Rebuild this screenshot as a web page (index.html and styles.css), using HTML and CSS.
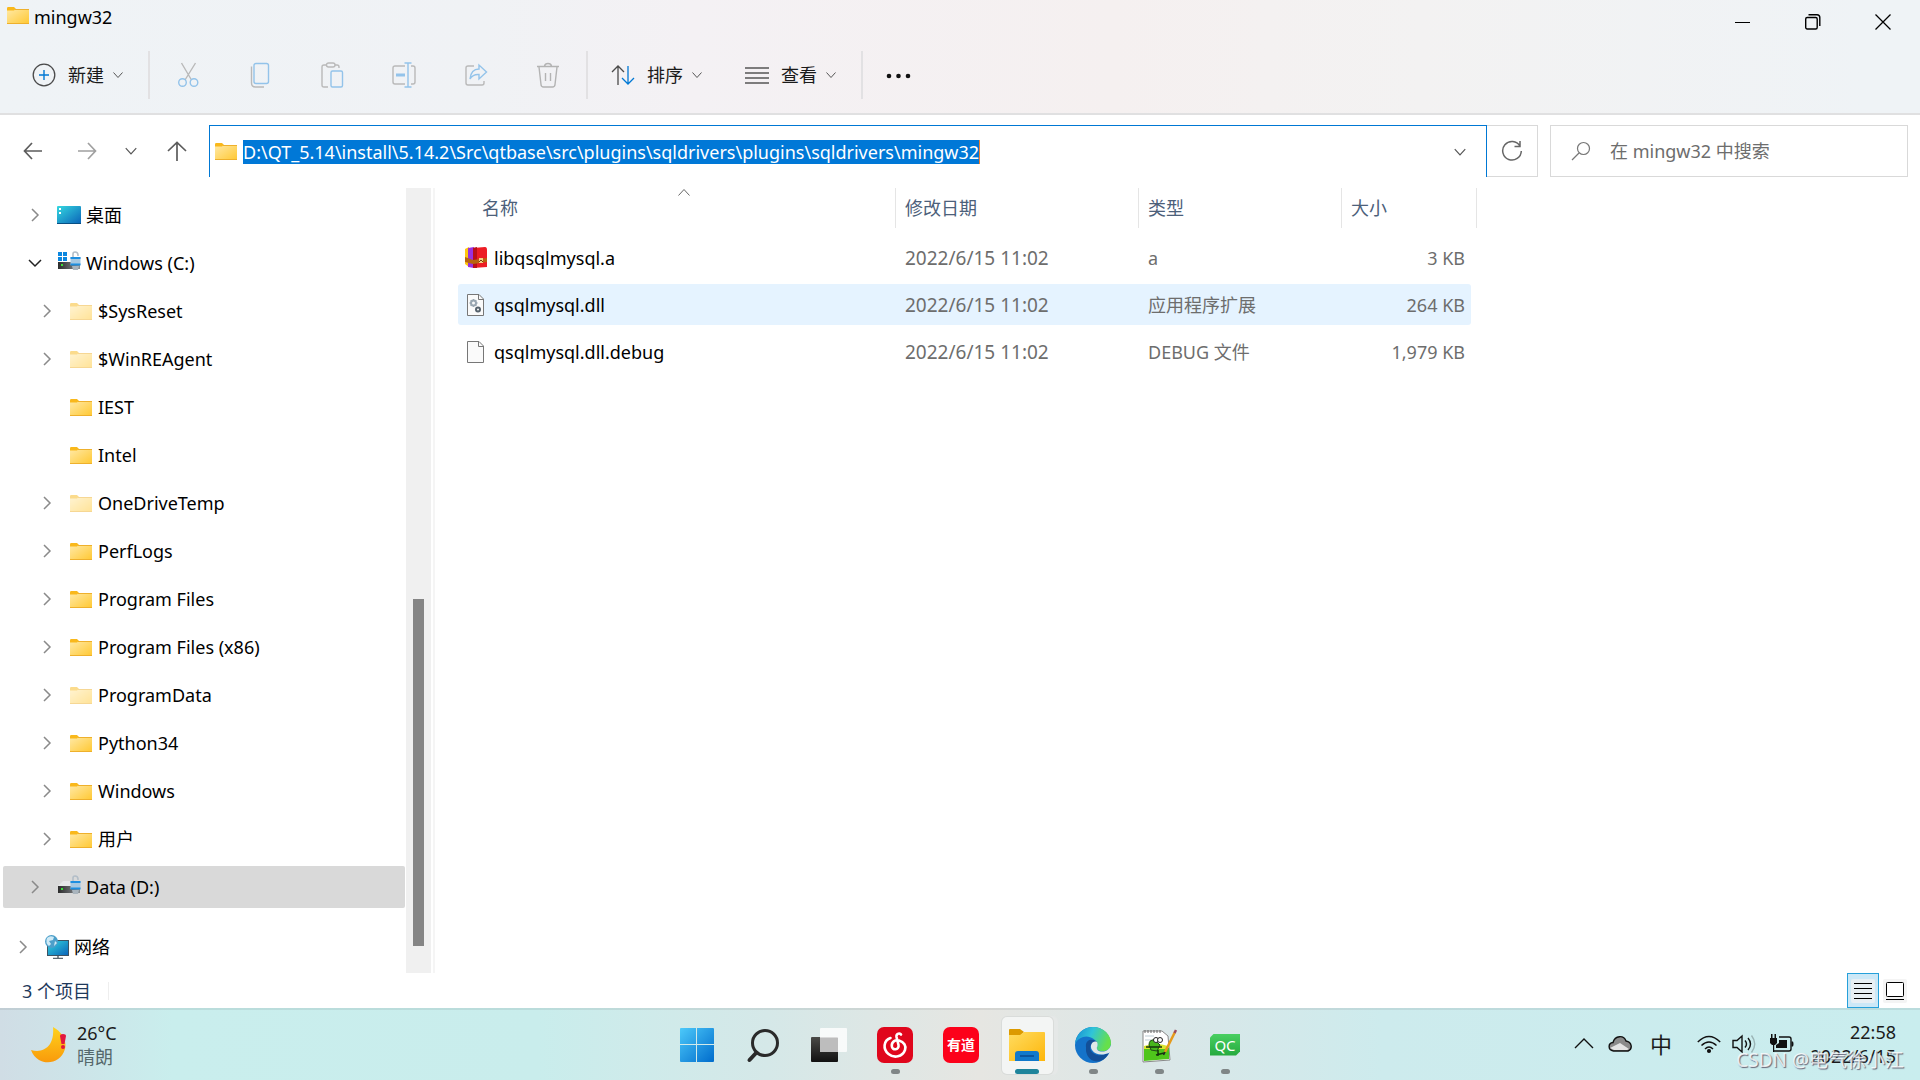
FILE: index.html
```html
<!DOCTYPE html>
<html lang="zh-CN">
<head>
    <meta charset="UTF-8">
    <meta name="viewport" content="width=device-width, initial-scale=1.0">
    <title>mingw32</title>
    <link rel="stylesheet" href="styles.css">
</head>
<body>
    <!-- Shared icons -->
    <svg class="sprite" aria-hidden="true">
        <defs>
            <linearGradient id="folderFill" x1="0" y1="0" x2="1" y2="1">
                <stop offset="0" stop-color="#ffe9a6"/>
                <stop offset="1" stop-color="#ffc832"/>
            </linearGradient>
            <linearGradient id="screenFill" x1="0" y1="0" x2="1" y2="1">
                <stop offset="0" stop-color="#35d8e0"/>
                <stop offset="1" stop-color="#0a62b8"/>
            </linearGradient>
            <linearGradient id="driveFill" x1="0" y1="0" x2="1" y2="0">
                <stop offset="0" stop-color="#2c2c2c"/>
                <stop offset="1" stop-color="#8a8f94"/>
            </linearGradient>
        </defs>
        <symbol id="folder" viewBox="0 0 22 17">
            <path d="M0 1.2Q0 0 1.2 0H7L8.5 1.5V5H0Z" fill="#f9b81b"/>
            <path d="M0 3.5H7L8.5 2H22V17H0Z" fill="url(#folderFill)"/>
            <path d="M8 2.5H22M0 16.5H22" stroke="#eeb02c" fill="none"/>
        </symbol>
        <symbol id="chev-down" viewBox="0 0 12 12">
            <path d="M1.500 3.500L6 8.500L10.500 3.500" fill="none" stroke="currentColor"/>
        </symbol>
        <symbol id="chev-right" viewBox="0 0 14 14">
            <path d="M4 1L10 7L4 13" fill="none" stroke="currentColor" stroke-width="1.500"/>
        </symbol>
        <symbol id="lock" viewBox="0 0 11 20">
            <path d="M3 7V3Q3 1 5 1Q8 1 8 4V5" fill="none" stroke="#b3bec8" stroke-width="1.600"/>
            <rect x="0.500" y="6" width="10" height="8" fill="#a5c8e2"/>
            <path d="M0.500 7H10.500M0.500 13.500H10.500" stroke="#1c8ee0" stroke-width="2"/>
            <path d="M2 15H9L8 19H3Z" fill="#a9b4bd"/>
        </symbol>
    </svg>

    <main class="window">
        <header class="chrome">
            <div class="titlebar">
                <svg class="folder"><use href="#folder"/></svg>
                <h1 class="title">mingw32</h1>
                <div class="window-buttons">
                    <button class="window-btn" aria-label="最小化"><svg width="16" height="16" viewBox="0 0 16 16"><path d="M0 8.500H15" stroke="#000"/></svg></button>
                    <button class="window-btn" aria-label="还原"><svg width="16" height="16" viewBox="0 0 16 16" fill="none" stroke="#000" stroke-width="1.400"><rect x="0.700" y="3.500" width="11.500" height="11.500" rx="1.500"/><path d="M3.500 0.700H12Q14.800 0.700 14.800 3.500V12"/></svg></button>
                    <button class="window-btn" aria-label="关闭"><svg width="16" height="16" viewBox="0 0 16 16"><path d="M0.500 0.500L15.500 15.500M15.500 0.500L0.500 15.500" stroke="#000" stroke-width="1.300"/></svg></button>
                </div>
            </div>

            <div class="command-bar">
                <button class="command">
                    <svg width="24" height="24" viewBox="0 0 24 24" fill="none"><circle cx="12" cy="12" r="10.800" stroke="#4a4a4a" stroke-width="1.300"/><path d="M12 7V17M7 12H17" stroke="#0078d4" stroke-width="1.400"/></svg>
                    <span>新建</span>
                    <svg class="chev"><use href="#chev-down"/></svg>
                </button>
                <div class="icon-commands">
                    <button class="icon-command" aria-label="剪切"><svg width="24" height="26" viewBox="0 0 24 26" fill="none" stroke-width="1.400"><path d="M5.500 1L15.500 18M19.500 1L9 18" stroke="#b9b9b9"/><circle cx="6.500" cy="20.500" r="3.800" stroke="#93c3ea"/><circle cx="18" cy="20.500" r="3.800" stroke="#93c3ea"/></svg></button>
                    <button class="icon-command" aria-label="复制"><svg width="24" height="26" viewBox="0 0 24 26" fill="none" stroke-width="1.400"><path d="M3.500 4.500V21Q3.500 25 7.500 25H16" stroke="#b9b9b9"/><rect x="6" y="1.500" width="14.500" height="20" rx="2" stroke="#93c3ea"/></svg></button>
                    <button class="icon-command" aria-label="粘贴"><svg width="24" height="26" viewBox="0 0 24 26" fill="none" stroke-width="1.400"><path d="M8 25H4Q2 25 2 23V5Q2 3 4 3H7M15 3H17Q19 3 19 5V6" stroke="#b9b9b9"/><rect x="6.500" y="1" width="8.500" height="4" rx="2" stroke="#b9b9b9"/><rect x="11" y="9" width="11.500" height="16" rx="1.500" stroke="#93c3ea"/></svg></button>
                    <button class="icon-command" aria-label="重命名"><svg width="24" height="26" viewBox="0 0 24 26" fill="none" stroke-width="1.400"><path d="M13 4H3Q1 4 1 6V20Q1 22 3 22H13M19 4H21Q23 4 23 6V20Q23 22 21 22H19" stroke="#b9b9b9"/><path d="M16 1V25M12.500 1H19.500M12.500 25H19.500" stroke="#93c3ea"/><path d="M4 13H13" stroke="#93c3ea" stroke-width="3"/></svg></button>
                    <button class="icon-command" aria-label="共享"><svg width="24" height="26" viewBox="0 0 24 26" fill="none" stroke-width="1.400"><path d="M10 4H4Q2 4 2 6V21Q2 23 4 23H18Q20 23 20 21V19" stroke="#b9b9b9"/><path d="M6 17Q7 7 15 7V3L22.500 10L15 17V12.500Q9 12 6 17Z" stroke="#93c3ea"/></svg></button>
                    <button class="icon-command" aria-label="删除"><svg width="24" height="26" viewBox="0 0 24 26" fill="none" stroke="#b3b3b3" stroke-width="1.400"><path d="M1 4.500H23M8.500 4Q9 1.500 12 1.500T15.500 4M3 5L5 22.500Q5.200 25 7.500 25H16.500Q18.800 25 19 22.500L21 5M9.500 11V19M14.500 11V19"/></svg></button>
                </div>
                <button class="command divided">
                    <svg width="24" height="24" viewBox="0 0 24 24" fill="none" stroke-width="1.300"><path d="M7 22V3M1 9L7 3L13 9" stroke="#4a4a4a"/><path d="M17 3V21M11 15L17 21L23 15" stroke="#0078d4"/></svg>
                    <span>排序</span>
                    <svg class="chev"><use href="#chev-down"/></svg>
                </button>
                <button class="command view">
                    <svg width="24" height="24" viewBox="0 0 24 24"><path d="M0 5H24M0 10H24M0 15H24M0 20H24" stroke="#555" stroke-width="1.300"/></svg>
                    <span>查看</span>
                    <svg class="chev"><use href="#chev-down"/></svg>
                </button>
                <button class="command divided" aria-label="更多"><svg width="26" height="24" viewBox="0 0 26 24" fill="#111"><circle cx="3" cy="13" r="2.300"/><circle cx="12.500" cy="13" r="2.300"/><circle cx="22" cy="13" r="2.300"/></svg></button>
            </div>
        </header>

        <div class="address-row">
            <nav class="history">
                <button class="history-btn" aria-label="后退"><svg width="20" height="20" viewBox="0 0 20 20"><path d="M19 10H2M9 2L1.500 10L9 18"/></svg></button>
                <button class="history-btn dim" aria-label="前进"><svg width="20" height="20" viewBox="0 0 20 20"><path d="M1 10H18M11 2L18.500 10L11 18"/></svg></button>
                <button class="history-btn recent" aria-label="最近"><svg class="chev"><use href="#chev-down"/></svg></button>
                <button class="history-btn up" aria-label="上移"><svg width="20" height="22" viewBox="0 0 20 22"><path d="M10 21V3M1 11L10 2.500L19 11"/></svg></button>
            </nav>
            <div class="address">
                <svg class="folder"><use href="#folder"/></svg>
                <input class="path" type="text" aria-label="地址" value="D:\QT_5.14\install\5.14.2\Src\qtbase\src\plugins\sqldrivers\plugins\sqldrivers\mingw32">
                <button class="address-btn" aria-label="以前的位置"><svg class="chev"><use href="#chev-down"/></svg></button>
            </div>
            <button class="refresh" aria-label="刷新"><svg width="22" height="22" viewBox="0 0 22 22" fill="none" stroke="#666" stroke-width="1.500"><path d="M19 6A9.300 9.300 0 1 0 20.300 11M19 1V6.500H13.500"/></svg></button>
            <label class="search">
                <svg width="20" height="20" viewBox="0 0 20 20" fill="none" stroke="#777" stroke-width="1.200"><circle cx="12.500" cy="7.500" r="6"/><path d="M8 12L1 19"/></svg>
                <input type="text" placeholder="在 mingw32 中搜索" aria-label="搜索">
            </label>
        </div>

        <div class="content">
            <nav class="sidebar">
                <ul class="tree">
                    <li><button class="node level-1"><svg class="arrow"><use href="#chev-right"/></svg><svg class="place" viewBox="0 0 24 24"><rect y="3" width="24" height="18" rx="1" fill="url(#screenFill)"/><path d="M2 6H4M2 10H4" stroke="#fff" stroke-width="2"/><path d="M0 20.500H24" stroke="#084f83"/></svg>桌面</button></li>
                    <li><button class="node level-1 open"><svg class="arrow"><use href="#chev-right"/></svg><svg class="place" viewBox="0 0 24 24"><path d="M1 1H5V5H1ZM6 1H10V5H6ZM1 6H5V10H1ZM6 6H10V10H6Z" fill="#0c87df"/><rect x="1" y="11" width="22" height="7" fill="url(#driveFill)"/><rect x="4" y="13" width="2" height="2" fill="#3be03b"/><use href="#lock" x="13" y="0" width="11" height="20"/></svg>Windows (C:)</button></li>
                    <li><button class="node level-2 faded"><svg class="arrow"><use href="#chev-right"/></svg><svg class="folder"><use href="#folder"/></svg>$SysReset</button></li>
                    <li><button class="node level-2 faded"><svg class="arrow"><use href="#chev-right"/></svg><svg class="folder"><use href="#folder"/></svg>$WinREAgent</button></li>
                    <li><button class="node level-2 leaf"><svg class="arrow"><use href="#chev-right"/></svg><svg class="folder"><use href="#folder"/></svg>IEST</button></li>
                    <li><button class="node level-2 leaf"><svg class="arrow"><use href="#chev-right"/></svg><svg class="folder"><use href="#folder"/></svg>Intel</button></li>
                    <li><button class="node level-2 faded"><svg class="arrow"><use href="#chev-right"/></svg><svg class="folder"><use href="#folder"/></svg>OneDriveTemp</button></li>
                    <li><button class="node level-2"><svg class="arrow"><use href="#chev-right"/></svg><svg class="folder"><use href="#folder"/></svg>PerfLogs</button></li>
                    <li><button class="node level-2"><svg class="arrow"><use href="#chev-right"/></svg><svg class="folder"><use href="#folder"/></svg>Program Files</button></li>
                    <li><button class="node level-2"><svg class="arrow"><use href="#chev-right"/></svg><svg class="folder"><use href="#folder"/></svg>Program Files (x86)</button></li>
                    <li><button class="node level-2 faded"><svg class="arrow"><use href="#chev-right"/></svg><svg class="folder"><use href="#folder"/></svg>ProgramData</button></li>
                    <li><button class="node level-2"><svg class="arrow"><use href="#chev-right"/></svg><svg class="folder"><use href="#folder"/></svg>Python34</button></li>
                    <li><button class="node level-2"><svg class="arrow"><use href="#chev-right"/></svg><svg class="folder"><use href="#folder"/></svg>Windows</button></li>
                    <li><button class="node level-2"><svg class="arrow"><use href="#chev-right"/></svg><svg class="folder"><use href="#folder"/></svg>用户</button></li>
                    <li><button class="node level-1 selected"><svg class="arrow"><use href="#chev-right"/></svg><svg class="place" viewBox="0 0 24 24"><path d="M1 11L6 6H19L23 11Z" fill="#e6e8ea"/><rect x="1" y="11" width="22" height="7" fill="url(#driveFill)"/><rect x="4" y="13" width="2" height="2" fill="#3be03b"/><use href="#lock" x="13" y="0" width="11" height="20"/></svg>Data (D:)</button></li>
                    <li class="network"><button class="node level-0"><svg class="arrow"><use href="#chev-right"/></svg><svg class="place" viewBox="0 0 24 24"><rect x="2.500" y="5.500" width="21" height="15" fill="url(#screenFill)" stroke="#3d5363"/><path d="M13 21V23M8 23.500H18" stroke="#5b6770" stroke-width="1.500"/><circle cx="6.500" cy="6.500" r="6.500" fill="#4c9fca"/><path d="M2 3Q5 0 9 2L8 5L4 6L6 9L4 11Q0 8 2 3M10 6L12 8L9 11Z" fill="#cfeaf6"/></svg>网络</button></li>
                </ul>
                <div class="scrollbar"><div class="thumb"></div></div>
            </nav>

            <section class="files">
                <table class="file-table">
                    <thead>
                        <tr>
                            <th class="col-name"><span>名称</span><svg class="sort-mark" viewBox="0 0 14 10"><path d="M1.500 7.500L7 1.500L12.500 7.500" fill="none" stroke="#666"/></svg></th>
                            <th class="col-date"><span>修改日期</span></th>
                            <th class="col-type"><span>类型</span></th>
                            <th class="col-size"><span>大小</span></th>
                        </tr>
                    </thead>
                    <tbody>
                        <tr>
                            <td><div class="file"><svg width="22" height="26" viewBox="0 0 22 26"><path d="M0 4L4 2V22L0 19Z" fill="#ffc90e"/><path d="M3 3L9 2V23L3 22Z" fill="#9a31dd"/><path d="M8 3L20 2Q22 2 22 5V22L8 23Z" fill="#ed1c24"/><path d="M8 3L12 2V23H8Z" fill="#b90f18"/><path d="M0 12L8 15L22 13V17L8 19L0 17Z" fill="#b8640f"/><path d="M14 13H18V18H14Z" fill="#f1cf82"/><path d="M14 17L16 15L18 17" stroke="#713c08" fill="none"/></svg>libqsqlmysql.a</div></td>
                            <td class="date">2022/6/15 11:02</td>
                            <td>a</td>
                            <td>3 KB</td>
                        </tr>
                        <tr class="hover">
                            <td><div class="file"><svg width="22" height="26" viewBox="0 0 22 26"><path d="M2.500 2.500H14L18.500 7V23.500H2.500Z" fill="#fafafa" stroke="#777"/><path d="M13.500 2.500V7.500H18.500" fill="none" stroke="#777"/><circle cx="8.500" cy="11" r="2.500" fill="none" stroke="#9aa7b2" stroke-width="2"/><path d="M8.500 7V8.500M8.500 13.500V15M4.500 11H6M11 11H12.500M5.700 8.200L7 9.500M10 12.500L11.300 13.800M11.300 8.200L10 9.500M7 12.500L5.700 13.800" stroke="#9aa7b2" stroke-width="1.500"/><circle cx="13" cy="17.500" r="2" fill="none" stroke="#56626c" stroke-width="2"/></svg>qsqlmysql.dll</div></td>
                            <td class="date">2022/6/15 11:02</td>
                            <td>应用程序扩展</td>
                            <td>264 KB</td>
                        </tr>
                        <tr>
                            <td><div class="file"><svg width="22" height="26" viewBox="0 0 22 26"><path d="M2.500 2.500H14L18.500 7V23.500H2.500Z" fill="#fafafa" stroke="#777"/><path d="M13.500 2.500V7.500H18.500" fill="none" stroke="#777"/></svg>qsqlmysql.dll.debug</div></td>
                            <td class="date">2022/6/15 11:02</td>
                            <td>DEBUG 文件</td>
                            <td>1,979 KB</td>
                        </tr>
                    </tbody>
                </table>
            </section>
        </div>

        <footer class="status-bar">
            <span class="count">3 个项目</span>
            <div class="view-modes">
                <button class="mode active" aria-label="详细信息"><svg width="24" height="24" viewBox="0 0 24 24"><rect width="24" height="24" rx="2" fill="#e8eff4"/><path d="M3 4.500H21M3 9.500H21M3 14.500H21M3 19.500H21" stroke="#000"/></svg></button>
                <button class="mode" aria-label="大图标"><svg width="24" height="24" viewBox="0 0 24 24"><rect width="24" height="24" rx="2" fill="#f4f4f4"/><rect x="3.500" y="3.500" width="17" height="14" rx="1" fill="#fff" stroke="#000"/><path d="M3 20.500H21" stroke="#000"/></svg></button>
            </div>
        </footer>
    </main>

    <footer class="taskbar">
        <button class="weather">
            <svg width="38" height="38" viewBox="0 0 38 38">
                <defs><linearGradient id="moon" x1="0" y1="0" x2="0" y2="1"><stop offset="0" stop-color="#ffd21c"/><stop offset="1" stop-color="#f99a0b"/></linearGradient></defs>
                <path d="M23 1C32 6 37 14 35 23C31 36 18 39 9 34Q3 30 1 24C8 26 15 25 20 18Q24 11 23 1Z" fill="url(#moon)"/>
                <path d="M30 10Q30 8 33 8T36 10L34.500 18H31.500Z" fill="#e3173e"/><circle cx="33" cy="21" r="2" fill="#e3173e"/>
            </svg>
            <span class="weather-text"><span>26°C</span><span class="sky">晴朗</span></span>
        </button>

        <div class="apps">
            <button class="app" aria-label="开始"><svg viewBox="0 0 36 36"><defs><linearGradient id="win" x1="0" y1="0" x2="1" y2="1"><stop offset="0" stop-color="#4cc9fa"/><stop offset="1" stop-color="#006ccc"/></linearGradient></defs><path d="M1 2Q1 1 2 1H17V17H1ZM18 1H34Q35 1 35 2V17H18ZM1 18H17V35H2Q1 35 1 34ZM18 18H35V34Q35 35 34 35H18Z" fill="url(#win)"/></svg></button>
            <button class="app" aria-label="搜索"><svg viewBox="0 0 36 36" fill="none" stroke="#2a2a2a"><circle cx="20" cy="16" r="12.500" stroke-width="3"/><path d="M11.500 25.500L4.500 33" stroke-width="4" stroke-linecap="round"/></svg></button>
            <button class="app" aria-label="任务视图"><svg viewBox="0 0 36 36"><defs><linearGradient id="task" x1="0" y1="0" x2="0" y2="1"><stop offset="0" stop-color="#4a4a47"/><stop offset="1" stop-color="#111"/></linearGradient></defs><rect y="10" width="27" height="25" rx="1" fill="url(#task)"/><rect x="9" y="1" width="27" height="24" rx="1" fill="#fff" opacity="0.800"/><path d="M9 11H27V25H9Z" fill="#bdbdbd"/></svg></button>
            <button class="app running" aria-label="网易云音乐"><svg viewBox="0 0 36 36"><rect width="36" height="36" rx="7" fill="#e0061c"/><path d="M24 7.500C22 5.500 19 7 19.500 10L21.500 18C22.500 23 15 24 14.800 19C14.500 15 18 12.500 22 13.500C27 15 29.500 19 28 23C25.500 30 17 31.500 11.500 27C5.500 22 6.500 13.500 13.500 11" fill="none" stroke="#fff" stroke-width="2.600" stroke-linecap="round"/></svg></button>
            <button class="app" aria-label="有道"><span class="youdao">有道</span></button>
            <button class="app running current" aria-label="文件资源管理器"><svg viewBox="0 0 36 36"><defs><linearGradient id="explorer" x1="0" y1="0" x2="1" y2="1"><stop offset="0" stop-color="#ffdc60"/><stop offset="1" stop-color="#fdb60b"/></linearGradient></defs><path d="M0 3Q0 2 1 2H11L15 5L11 9H0Z" fill="#dc9a00"/><path d="M0 8H11L15 5H35Q36 5 36 6V34H0Z" fill="url(#explorer)"/><path d="M6 34V27Q6 24 9 24H27Q30 24 30 27V34Z" fill="#1179cb"/><path d="M11 29H25" stroke="#0a4a8e" stroke-width="1.500"/></svg></button>
            <button class="app running" aria-label="Edge"><svg viewBox="0 0 36 36"><defs><linearGradient id="edgeTop" x1="0" y1="0" x2="1" y2="0.300"><stop offset="0" stop-color="#168bd4"/><stop offset="0.500" stop-color="#30c4d8"/><stop offset="1" stop-color="#66e04b"/></linearGradient></defs><circle cx="18" cy="18" r="18" fill="#1473ca"/><path d="M0 17C1 7 8 0 18 0C29 0 36 8 36 16C36 23 30 25 25 24C21 23 22 21 22.500 18C22 12 14 8 8 10Q2 12 0 17Z" fill="url(#edgeTop)"/><path d="M11 20C10 12 18 11 22 15C15 15 13 22 18 26C23 30 29 28 34 26C27 39 13 36 11 24Z" fill="#124f98"/><path d="M22 15C18 13 14 18 17 23C21 29 29 28 34 26L36 24V18C34 25 26 26 22.500 23Q21 21 22.500 19Q23 17 22 15Z" fill="#dfe8e8"/></svg></button>
            <button class="app running" aria-label="Notepad++"><svg viewBox="0 0 36 36"><path d="M2 4H21L27 9L29 33L2 35Z" fill="#fff" stroke="#888"/><path d="M3 21Q15 17 28 21V32L3 34Z" fill="#4fc51b"/><path d="M3 19Q15 15 27 19V22H3Z" fill="#d9e62e"/><path d="M4 9H13M4 13H10" stroke="#bdcdd5"/><path d="M4 3V6M7 3V6M10 3V6M13 3V6M16 3V6M19 3V6" stroke="#666"/><path d="M8 18Q8 12 14 13L19 18L16 24L10 23Z" fill="#47b51d" stroke="#204a16"/><circle cx="15" cy="13" r="2.500" fill="#fff" stroke="#222"/><circle cx="19" cy="13" r="2.500" fill="#fff" stroke="#222"/><path d="M5 20L21 20M15 28L23 26M17 23V29" stroke="#15350d" stroke-width="1.500"/><path d="M24 25L34 5" stroke="#e59a1c" stroke-width="2.500"/><path d="M33.500 6L35 3" stroke="#9c4c5e" stroke-width="2.500"/><path d="M22.500 28L24 25" stroke="#222" stroke-width="1.500"/></svg></button>
            <button class="app running" aria-label="Qt Creator"><span class="qt">QC</span></button>
        </div>

        <div class="tray">
            <button class="tray-btn" aria-label="显示隐藏的图标"><svg width="20" height="24" viewBox="0 0 20 24"><path d="M1 16L10 7L19 16" fill="none" stroke="#111" stroke-width="1.400"/></svg></button>
            <button class="tray-btn" aria-label="OneDrive"><svg width="24" height="24" viewBox="0 0 24 24"><path d="M5.500 19C-0.500 18 0 11 5 10.500C7 3 16 3 18 9C24 10 25 17 20 19Z" fill="#8b8b8b" stroke="#111" stroke-width="1.400"/><path d="M2 16L12 11L21 17L19 18H6Z" fill="#e4e4e4"/></svg></button>
            <button class="tray-btn ime">中</button>
            <button class="tray-btn network-status" aria-label="网络 音量 电池">
                <svg width="24" height="24" viewBox="0 0 24 24" fill="none" stroke="#111" stroke-width="1.500"><path d="M0.800 10Q12 -1 23.200 10M4.500 13.500Q12 6.500 19.500 13.500M8 17Q12 13 16 17"/><circle cx="12" cy="19" r="1.300" fill="#111"/></svg>
                <svg width="26" height="24" viewBox="0 0 26 24" fill="none" stroke="#111" stroke-width="1.400"><path d="M1 8.500H5L10 4V20L5 15.500H1ZM13 8.500Q16 12 13 15.500M16 6Q21 12 16 18"/><path d="M19.500 3.500Q26 12 19.500 20.500" stroke="#9bb5b6"/></svg>
                <svg width="26" height="24" viewBox="0 0 26 24" fill="#111"><path d="M1 6H8V11L6 13H3L1 11ZM2 2H3.500V6H2ZM5.500 2H7V6H5.500ZM4 12H5.200V20H4Z"/><path d="M10 5H20Q22 5 22 7V17Q22 19 20 19H5" fill="none" stroke="#111" stroke-width="1.400"/><path d="M10 8H18V16H7V13L10 11ZM22.500 9.500H24Q25 12 24 14.500H22.500Z"/></svg>
            </button>
            <div class="clock"><time>22:58</time><time>2022/6/15</time><span class="watermark">CSDN @电气徐小江</span></div>
        </div>
    </footer>
</body>
</html>
```

FILE: styles.css
```css
* {
    margin: 0;
    padding: 0;
    box-sizing: border-box;
}

body {
    font-family: "Noto Sans", "Noto Sans CJK SC", sans-serif;
    font-size: 18px;
    line-height: 24px;
    color: #000;
    height: 100vh;
    display: flex;
    flex-direction: column;
    overflow: hidden;
}

button,
input {
    font: inherit;
    color: inherit;
    background: none;
    border: none;
    outline: none;
}

svg {
    display: block;
    flex: none;
}

.sprite {
    position: absolute;
    width: 0;
    height: 0;
}

.folder {
    width: 22px;
    height: 17px;
}

.chev {
    width: 12px;
    height: 12px;
    color: #555;
}

.window {
    flex: 1;
    min-height: 0;
    display: flex;
    flex-direction: column;
    background: #fff;
}

/* Title and command bar */
.chrome {
    background: linear-gradient(90deg, #eff3f6 0%, #f0f2f5 25%, #f4f1f4 36%, #f5f0f0 58%, #f3f2f2 74%, #eff3f6 97%);
    border-bottom: 2px solid #e0e0e1;
}

.titlebar {
    display: flex;
    height: 43px;
    padding-left: 7px;
}

.titlebar .folder {
    margin-top: 7px;
}

.title {
    flex: 1;
    margin-left: 5px;
    font-size: 18px;
    font-weight: normal;
    line-height: 34px;
}

.window-buttons {
    display: flex;
    padding-right: 2px;
}

.window-btn {
    width: 70px;
    display: flex;
    justify-content: center;
    align-items: center;
}

.command-bar {
    display: flex;
    align-items: center;
    height: 70px;
    padding: 0 0 6px 8px;
}

.command {
    display: flex;
    align-items: center;
    gap: 12px;
    height: 48px;
    padding: 0 24px;
    color: #1a1a1a;
}

.command .chev {
    margin-left: -4px;
}

.command.divided {
    border-left: 2px solid #e2e1e3;
    padding-left: 23px;
}

.command.view {
    padding-left: 18px;
}

.icon-commands {
    display: flex;
    border-left: 2px solid #e2e1e3;
    padding: 0 2px;
}

.icon-command {
    width: 72px;
    height: 48px;
    display: flex;
    justify-content: center;
    align-items: center;
}

/* Address row */
.address-row {
    display: flex;
    height: 67px;
    padding: 10px 12px 5px 6px;
}

.address-row .chev {
    width: 14px;
    height: 14px;
}

.history {
    display: flex;
    width: 203px;
}

.history-btn {
    width: 54px;
    display: flex;
    justify-content: center;
    align-items: center;
}

.history-btn path {
    fill: none;
    stroke: #5c5c5c;
    stroke-width: 1.7px;
}

.history-btn.dim path {
    stroke: #a0a0a0;
}

.history-btn.recent {
    width: 34px;
}

.history-btn.up {
    width: 58px;
}

.address {
    flex: 1;
    display: flex;
    align-items: center;
    border: 1px solid #0078d4;
    border-bottom: none;
    padding-left: 5px;
}

.path {
    field-sizing: content;
    height: 24px;
    margin-left: 6px;
    background: #0078d7;
    color: #fff;
    border-right: 1px solid #f08030;
}

.address-btn {
    margin-left: auto;
    padding: 12px 19px;
}

.refresh {
    width: 51px;
    display: flex;
    justify-content: center;
    align-items: center;
    border: 1px solid #d9d9d9;
    border-left: none;
}

.search {
    width: 358px;
    margin-left: 12px;
    display: flex;
    align-items: center;
    border: 1px solid #d9d9d9;
    padding-left: 20px;
}

.search input {
    flex: 1;
    min-width: 0;
    height: 40px;
    margin-left: 19px;
}

.search input::placeholder {
    color: #6d6d6d;
}

/* Folder tree */
.content {
    flex: 1;
    min-height: 0;
    display: flex;
}

.sidebar {
    width: 435px;
    display: flex;
    padding-top: 6px;
}

.tree {
    flex: 1;
    list-style: none;
    padding: 6px 1px 0 3px;
}

.tree li {
    height: 42px;
    margin-bottom: 6px;
}

.tree .network {
    margin-top: 18px;
}

.node {
    width: 100%;
    height: 42px;
    display: flex;
    align-items: center;
    border-radius: 2px;
    text-align: left;
}

.arrow {
    width: 14px;
    height: 14px;
    color: #8a8a8a;
}

.place {
    width: 24px;
    height: 24px;
    margin: 0 5px 0 15px;
}

.node .folder {
    margin: 0 6px 0 16px;
}

.level-0 {
    padding-left: 13px;
}

.level-1 {
    padding-left: 25px;
}

.level-2 {
    padding-left: 37px;
}

.open .arrow {
    color: #222;
    transform: rotate(90deg);
}

.leaf .arrow {
    visibility: hidden;
}

.faded .folder {
    opacity: 0.5;
}

.selected {
    background: #d9d9d9;
}

.scrollbar {
    width: 29px;
    background: #f0f0f0;
    border-right: 2px solid #f5f5f5;
    box-shadow: inset -2px 0 #fff;
    padding-top: 411px;
}

.thumb {
    width: 11px;
    height: 347px;
    margin-left: 7px;
    background: #858585;
}

/* File list */
.files {
    flex: 1;
    padding-left: 23px;
}

.file-table {
    width: 1013px;
    table-layout: fixed;
    border-spacing: 0 6px;
    color: #6d6d6d;
}

.file-table th {
    position: relative;
    height: 43px;
    font-weight: normal;
    text-align: left;
    vertical-align: top;
    color: #4c607a;
}

.file-table th span {
    display: block;
    height: 40px;
    line-height: 40px;
    padding-left: 9px;
    border-right: 1px solid #e5e5e5;
}

.file-table .col-name span {
    padding-left: 24px;
}

.file-table .col-size span {
    margin-right: -6px;
}

.col-name {
    width: 438px;
}

.col-date {
    width: 243px;
}

.col-type {
    width: 203px;
}

.sort-mark {
    position: absolute;
    top: 0;
    left: 50%;
    width: 14px;
    height: 10px;
}

.file-table td {
    height: 41px;
    padding-left: 9px;
}

.file-table td:first-child {
    padding-left: 7px;
    border-radius: 3px 0 0 3px;
}

.file-table td:last-child {
    padding-right: 6px;
    border-radius: 0 3px 3px 0;
    text-align: right;
}

.file-table .date {
    font-size: 19px;
}

.file {
    display: flex;
    align-items: center;
    gap: 7px;
    color: #000;
}

.hover td {
    background: #e5f3ff;
}

/* Status bar */
.status-bar {
    display: flex;
    justify-content: space-between;
    align-items: center;
    height: 35px;
    padding: 0 9px 0 22px;
}

.count {
    line-height: 18px;
    padding-right: 17px;
    border-right: 1px solid #eee;
    color: #1e395b;
}

.view-modes {
    display: flex;
}

.mode {
    width: 32px;
    height: 35px;
    display: flex;
    justify-content: center;
    align-items: center;
    border: 1px solid transparent;
}

.mode.active {
    background: #cce8f7;
    border-color: #26a0da;
}

/* Taskbar */
.taskbar {
    display: grid;
    grid-template-columns: 1fr auto 1fr;
    height: 72px;
    border-top: 2px solid rgba(0, 0, 0, 0.07);
    background: linear-gradient(90deg, #d0dde5 0%, #c9eeed 9%, #c9edec 28%, #d5e8e8 40%, #e6e6e2 51%, #dae7e8 61%, #cdebed 72%, #c9edee 100%);
}

.weather {
    display: flex;
    align-items: center;
    justify-self: start;
    padding-left: 30px;
    gap: 9px;
    color: #1b1b1b;
}

.weather-text,
.clock {
    display: flex;
    flex-direction: column;
    text-align: left;
}

.sky {
    color: #56696c;
}

.apps {
    display: flex;
    padding-left: 2px;
}

.app {
    position: relative;
    width: 66px;
    display: flex;
    justify-content: center;
    align-items: center;
    padding-bottom: 1px;
}

.app svg {
    position: relative;
    width: 36px;
    height: 36px;
}

.running::after {
    content: "";
    position: absolute;
    bottom: 6px;
    width: 9px;
    height: 5px;
    border-radius: 3px;
    background: #808687;
}

.current::before {
    content: "";
    position: absolute;
    top: 7px;
    width: 51px;
    height: 57px;
    border-radius: 5px;
    background: #f3f5f4;
    box-shadow: 0 0 0 1px #d9dcda, 4px 0 0 1px #e5e8e7;
}

.current::after {
    width: 24px;
    background: #1e849b;
}

.youdao {
    width: 36px;
    height: 36px;
    border-radius: 7px;
    background: #fc011a;
    color: #fff;
    font-size: 14px;
    font-weight: bold;
    line-height: 36px;
}

.qt {
    width: 30px;
    height: 22px;
    background: linear-gradient(#48cf61, #25a93d);
    clip-path: polygon(4px 0, 100% 0, 100% 18px, 26px 100%, 0 100%, 0 4px);
    color: #fff;
    font-size: 15px;
    line-height: 22px;
}

.tray {
    display: flex;
    justify-content: flex-end;
    align-items: center;
    padding: 0 24px 2px 0;
    color: #1b1b1b;
}

.tray-btn {
    display: flex;
    align-items: center;
    margin-right: 14px;
}

.ime {
    margin-left: 4px;
    margin-right: 25px;
    font-size: 22px;
}

.network-status {
    gap: 11px;
}

.clock {
    position: relative;
    width: 87px;
    text-align: right;
}

.watermark {
    position: absolute;
    right: -8px;
    top: 28px;
    font-size: 19px;
    white-space: nowrap;
    color: rgba(255, 255, 255, 0.8);
    text-shadow: 1px 1px 1px #667;
}
```
